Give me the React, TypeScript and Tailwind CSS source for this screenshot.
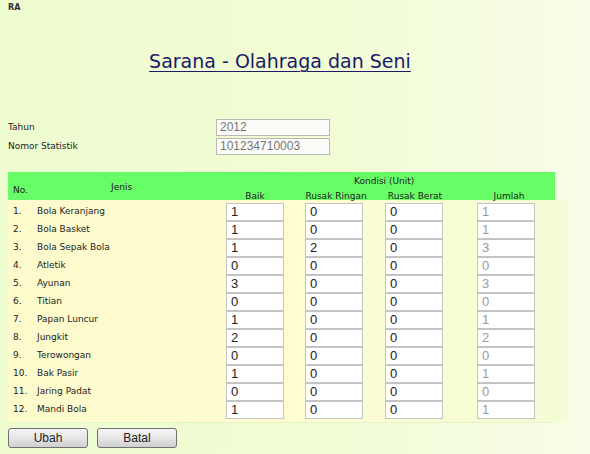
import React from "react";

const rows: [string, string, string, string, string][] = [
  ["Bola Keranjang", "1", "0", "0", "1"],
  ["Bola Basket", "1", "0", "0", "1"],
  ["Bola Sepak Bola", "1", "2", "0", "3"],
  ["Atletik", "0", "0", "0", "0"],
  ["Ayunan", "3", "0", "0", "3"],
  ["Titian", "0", "0", "0", "0"],
  ["Papan Luncur", "1", "0", "0", "1"],
  ["Jungkit", "2", "0", "0", "2"],
  ["Terowongan", "0", "0", "0", "0"],
  ["Bak Pasir", "1", "0", "0", "1"],
  ["Jaring Padat", "0", "0", "0", "0"],
  ["Mandi Bola", "1", "0", "0", "1"],
];

const tah = { fontFamily: '"DejaVu Sans", Verdana, sans-serif' };
const ari = { fontFamily: '"Liberation Sans", Arial, sans-serif' };

function Cell({ v, gray }: { v: string; gray?: boolean }) {
  return (
    <div
      className={`h-[18px] w-[58px] border border-[#c4c4c4] bg-white pl-[4px] text-[13px] leading-[16px] ${
        gray ? "text-[#9a9a9a]" : "text-[#222]"
      }`}
      style={ari}
    >
      {v}
    </div>
  );
}

export default function App() {
  return (
    <div className="w-[590px] h-[454px] bg-gradient-to-r from-[#eefbcf] via-[#f1fcd3] to-[#f8fde8] text-[#222] overflow-hidden" style={tah}>
      <div className="pl-[8px] pt-[3px] text-[8px] font-bold leading-[10px] text-[#333]">RA</div>
      <div className="mt-[37px] flex justify-center pr-[30px]">
        <span className="text-[19px] leading-[22px] text-[#1a1a6a] underline underline-offset-[3px] decoration-1">
          Sarana - Olahraga dan Seni
        </span>
      </div>
      <div className="mt-[47px] flex flex-col gap-[2px] pl-[8px] text-[9px] text-[#222]">
        <div className="flex items-center">
          <div className="w-[208px]">Tahun</div>
          <div className="h-[17px] w-[114px] border border-[#b8b8b8] bg-[#fbfbf7] pl-[3px] text-[12px] leading-[15px] text-[#777]" style={ari}>2012</div>
        </div>
        <div className="flex items-center">
          <div className="w-[208px]">Nomor Statistik</div>
          <div className="h-[17px] w-[114px] border border-[#b8b8b8] bg-[#fbfbf7] pl-[3px] text-[12px] leading-[15px] text-[#777]" style={ari}>101234710003</div>
        </div>
      </div>
      <div className="mt-[17px] ml-[8px] w-[560px]">
        <div className="flex h-[28px] w-[547px] bg-[#66fd66] text-[9px] text-[#222]">
          <div className="w-[29px] pl-[5px] pt-[12px]">No.</div>
          <div className="w-[189px] pl-[74px] pt-[9px]">Jenis</div>
          <div className="flex flex-col">
            <div className="pl-[128px] pt-[3px] leading-[12px]">Kondisi (Unit)</div>
            <div className="flex pt-[4px] leading-[11px]">
              <div className="w-[58px] text-center">Baik</div>
              <div className="ml-[20px] w-[64px] text-center">Rusak Ringan</div>
              <div className="ml-[16px] w-[62px] text-center">Rusak Berat</div>
              <div className="ml-[34px] w-[58px] text-center">Jumlah</div>
            </div>
          </div>
        </div>
        <div className="bg-gradient-to-r from-[#fdfbcc] via-[#fffdd0] to-[#f3fcd6] pt-[3px] pb-[3px]">
          {rows.map((r, i) => (
            <div key={i} className="flex h-[18px] items-center text-[9px] text-[#222]">
              <div className="w-[29px] pl-[5px]">{i + 1}.</div>
              <div className="w-[189px]">{r[0]}</div>
              <Cell v={r[1]} />
              <div className="w-[21px]" />
              <Cell v={r[2]} />
              <div className="w-[22px]" />
              <Cell v={r[3]} />
              <div className="w-[34px]" />
              <Cell v={r[4]} gray />
            </div>
          ))}
        </div>
        <div className="h-[1px] w-[545px] bg-[#e6f5c8]" />
      </div>
      <div className="mt-[5px] flex gap-[9px] pl-[8px]">
        {["Ubah", "Batal"].map((b) => (
          <button
            key={b}
            className="h-[20px] w-[80px] rounded-[3px] border border-[#707070] bg-gradient-to-b from-[#f6f6f6] via-[#e6e6e6] to-[#d0d0d0] text-[12px] leading-[18px] text-[#222]"
            style={ari}
          >
            {b}
          </button>
        ))}
      </div>
    </div>
  );
}
